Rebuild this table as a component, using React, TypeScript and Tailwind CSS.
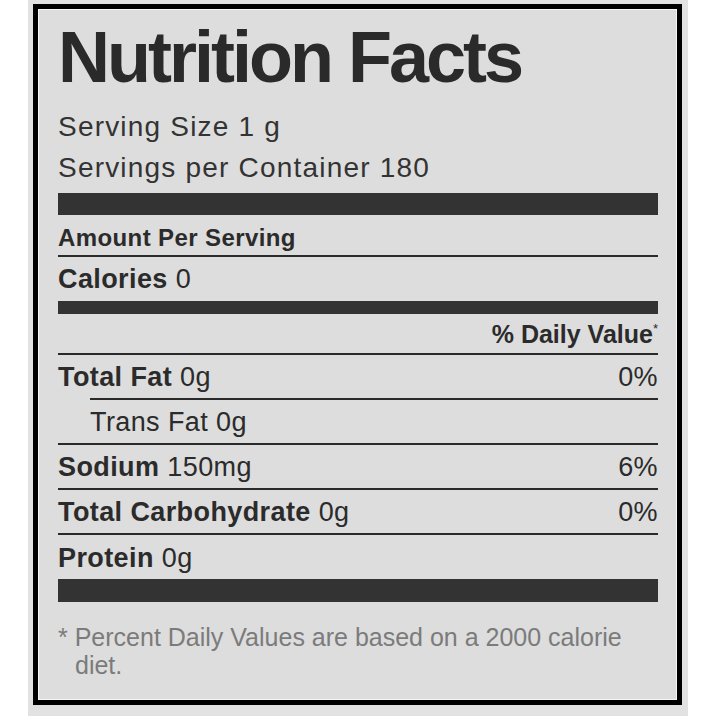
export default function App() {
  const rows = [
    { label: "Total Fat", amount: "0g", dv: "0%", bold: true, indent: false },
    { label: "Trans Fat", amount: "0g", dv: "", bold: false, indent: true },
    { label: "Sodium", amount: "150mg", dv: "6%", bold: true, indent: false },
    { label: "Total Carbohydrate", amount: "0g", dv: "0%", bold: true, indent: false },
    { label: "Protein", amount: "0g", dv: "", bold: true, indent: false },
  ];

  return (
    <div className="min-h-[717px] bg-white font-['Liberation_Sans',Arial,sans-serif] text-[#2b2b2b]">
      <div className="ml-[28px] w-[660px] bg-[#e2e2e2] pb-[11px] pl-[5px] pr-[6px] pt-[4px]">
        <div className="border-[5px] border-black">
          <div className="border border-[#f5f5f5] bg-[#dddddd] pb-[20px] pl-[19px] pr-[18px] pt-[11px]">
            <h1 className="text-[72px] font-bold leading-[72px] tracking-[-3px] text-[#2a2a2a]">
              Nutrition Facts
            </h1>
            <p className="mt-[13px] text-[28px] leading-[41px] tracking-[1.2px] text-[#333]">Serving Size 1 g</p>
            <p className="text-[28px] leading-[41px] tracking-[1.2px] text-[#333]">Servings per Container 180</p>
            <div className="mt-[5px] h-[22px] bg-[#333]" />

            <p className="mt-[8px] border-b-2 border-[#2a2a2a] pb-[2px] text-[24px] font-bold leading-[30px] tracking-[0.4px]">
              Amount Per Serving
            </p>
            <p className="text-[27px] leading-[44px] tracking-[0.4px]">
              <span className="font-bold">Calories</span> 0
            </p>
            <div className="h-[13px] bg-[#333]" />

            <p className="h-[39px] pt-[2px] text-right text-[25px] font-bold leading-[37px]">
              % Daily Value
              <span className="relative -top-[10px] text-[13px] font-normal leading-none">*</span>
            </p>

            {rows.map((r) => (
              <div
                key={r.label}
                className={`flex items-center justify-between border-t-2 border-[#2a2a2a] pt-[2px] text-[27px] leading-[41px] tracking-[0.4px] ${
                  r.indent ? "ml-[32px]" : ""
                } ${r.label === "Protein" ? "h-[46px]" : "h-[45px]"}`}
              >
                <span>
                  <span className={r.bold ? "font-bold" : ""}>{r.label}</span> {r.amount}
                </span>
                <span>{r.dv}</span>
              </div>
            ))}
            <div className="h-[23px] bg-[#333]" />

            <p className="mt-[21px] pl-[17px] -indent-[17px] text-[25px] leading-[28px] text-[#7b7b7b]">
              * Percent Daily Values are based on a 2000 calorie diet.
            </p>
          </div>
        </div>
      </div>
    </div>
  );
}
